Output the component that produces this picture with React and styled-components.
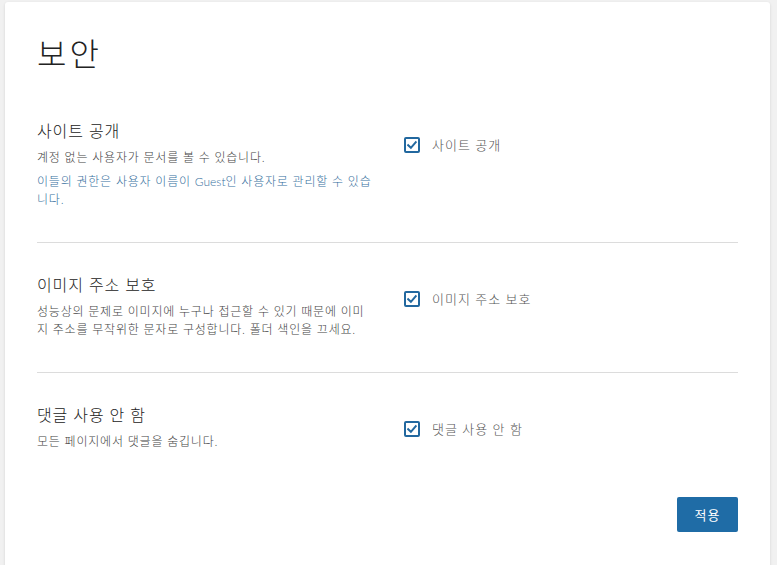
import React from 'react';
import styled, { createGlobalStyle } from 'styled-components';

const GlobalStyle = createGlobalStyle`
  html, body {
    margin: 0;
    padding: 0;
    background: #f1f1f1;
  }
  body {
    font-family: "Noto Sans", "Noto Sans CJK KR", sans-serif;
    color: #222;
  }
`;

const Latin = styled.span`
  font-family: Lato, "Noto Sans", sans-serif;
  letter-spacing: 0;
`;

const sections = [
  {
    id: 'public',
    title: '사이트 공개',
    paragraphs: [
      { text: '계정 없는 사용자가 문서를 볼 수 있습니다.' },
      {
        text: (
          <>
            이들의 권한은 사용자 이름이 <Latin>Guest</Latin>인 사용자로 관리할 수 있습니다.
          </>
        ),
        info: true,
      },
    ],
    label: '사이트 공개',
  },
  {
    id: 'image',
    title: '이미지 주소 보호',
    paragraphs: [
      { text: '성능상의 문제로 이미지에 누구나 접근할 수 있기 때문에 이미지 주소를 무작위한 문자로 구성합니다. 폴더 색인을 끄세요.' },
    ],
    label: '이미지 주소 보호',
  },
  {
    id: 'comments',
    title: '댓글 사용 안 함',
    paragraphs: [{ text: '모든 페이지에서 댓글을 숨깁니다.' }],
    label: '댓글 사용 안 함',
  },
];

const CheckIcon = () => (
  <svg width="10" height="10" viewBox="0 0 10 10">
    <path d="M1.2 5.2 L3.9 7.8 L8.8 2.2" fill="none" stroke="#22689f" strokeWidth="2" strokeLinecap="square" />
  </svg>
);

const App = () => (
  <Page>
    <GlobalStyle />
    <Card>
      <Title>보안</Title>
      {sections.map(section => (
        <Section key={section.id}>
          <Info>
            <SectionTitle>{section.title}</SectionTitle>
            {section.paragraphs.map((p, i) => (
              <Description key={i} info={p.info ? 1 : 0}>
                {p.text}
              </Description>
            ))}
          </Info>
          <Control>
            <CheckLabel>
              <Box>
                <CheckIcon />
              </Box>
              {section.label}
            </CheckLabel>
          </Control>
        </Section>
      ))}
      <Footer>
        <ApplyButton>적용</ApplyButton>
      </Footer>
    </Card>
  </Page>
);

const blue = '#22689f';

const Page = styled.div`
  padding: 2px 7px 0 5px;
  min-height: 563px;
`;

const Card = styled.div`
  background: #fff;
  border-radius: 3px;
  box-shadow: 0 1px 3px rgba(0, 0, 0, 0.12);
  padding: 33px 32px 40px;
  min-height: 531px;
  box-sizing: border-box;
`;

const Title = styled.h1`
  margin: 0 0 15px;
  font-size: 32px;
  line-height: 38px;
  font-weight: 300;
  letter-spacing: 3px;
  color: #222;
`;

const Section = styled.section`
  display: grid;
  grid-template-columns: 338px 1fr;
  column-gap: 29px;
  padding: 32px 0 33px;
  & + & {
    border-top: 1px solid #dcdcdc;
    padding-top: 31px;
  }
`;

const Info = styled.div`
  display: flex;
  flex-direction: column;
`;

const SectionTitle = styled.h2`
  margin: 0 0 7px;
  font-size: 16px;
  line-height: 22px;
  font-weight: 300;
  letter-spacing: 0.9px;
  color: #222;
`;

const Description = styled.p`
  margin: 0;
  font-size: 12px;
  line-height: 18px;
  font-weight: 300;
  letter-spacing: 0.8px;
  color: ${p => (p.info ? '#37709e' : '#444')};
  & + & {
    margin-top: 6px;
  }
`;

const Control = styled.div`
  padding-top: 17px;
`;

const CheckLabel = styled.label`
  display: flex;
  align-items: center;
  gap: 12px;
  font-size: 13px;
  line-height: 16px;
  font-weight: 300;
  letter-spacing: 1px;
  color: #555;
`;

const Box = styled.span`
  width: 16px;
  height: 16px;
  box-sizing: border-box;
  border: 2px solid ${blue};
  border-radius: 2px;
  display: flex;
  align-items: center;
  justify-content: center;
`;

const Footer = styled.div`
  display: flex;
  justify-content: flex-end;
  margin-top: 13px;
`;

const ApplyButton = styled.button`
  height: 35px;
  width: 61px;
  border: none;
  border-radius: 2px;
  background: #1f6ca6;
  color: #fff;
  font-family: "Noto Sans", "Noto Sans CJK KR", sans-serif;
  font-size: 13px;
  letter-spacing: 1px;
  cursor: pointer;
`;

export default App;
